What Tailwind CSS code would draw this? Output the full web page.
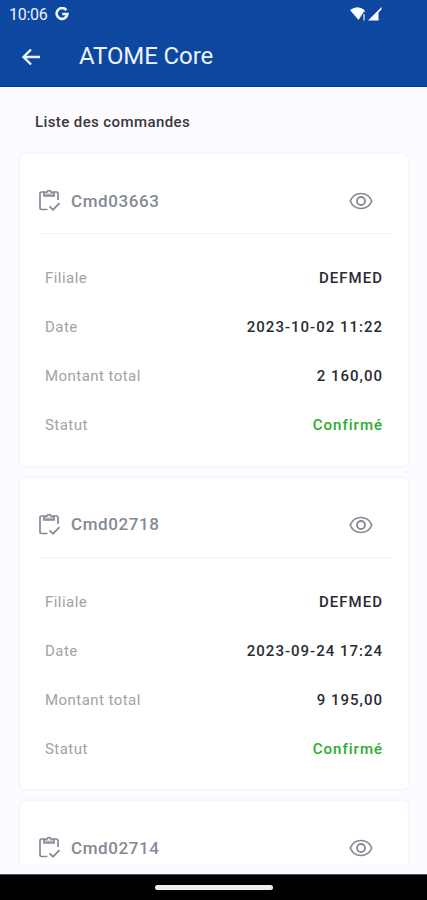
<!DOCTYPE html>
<html lang="fr">
<head>
<meta charset="utf-8">
<meta name="viewport" content="width=device-width, initial-scale=1">
<title>ATOME Core</title>
<script src="https://cdn.jsdelivr.net/npm/@tailwindcss/browser@4"></script>
</head>
<body class="bg-[#fdfbff]">
<svg class="hidden">
  <symbol id="clip" viewBox="0 0 24 24"><g fill="none" stroke="currentColor" stroke-width="1.700"><path d="M10.500 21.500H4.500A1.500 1.500 0 0 1 3 20V5.500A1.500 1.500 0 0 1 4.500 4H8M16 4h3.500A1.500 1.500 0 0 1 21 5.500V12"/><path d="M12.500 18.300l3.500 3.400 6.500-6.500"/><path d="M7 4.300h2.700a2.400 2.400 0 0 1 4.600 0H17V8H7Z"/></g><path fill="currentColor" d="M8 5.500h8V8H8z" opacity=".6"/></symbol>
  <symbol id="eye" viewBox="0 0 24 18"><path d="M1.200 9C3.200 4.200 7.200 1.500 12 1.500S20.800 4.200 22.800 9C20.800 13.800 16.800 16.500 12 16.500S3.200 13.800 1.200 9Z" fill="none" stroke="currentColor" stroke-width="1.700"/><circle cx="12" cy="9" r="4" fill="none" stroke="currentColor" stroke-width="1.800"/></symbol>
</svg>
<div class="flex h-[900px] w-[427px] flex-col overflow-hidden bg-[#fdfbff] font-['Roboto',sans-serif]">
  <header class="h-[87px] shrink-0 border-b border-[#0a3793] bg-[#0e479f] text-[#edf2ff]">
    <div class="flex h-7 items-center pl-[9px]">
      <span class="w-[46px] pt-px text-[16px] leading-7 tracking-[-0.3px]">10:06</span>
      <svg class="h-[14px] w-[14px]" viewBox="0 0 14 14" fill="none" stroke="currentColor" stroke-width="2.600"><path d="M11.300 3.100A5.400 5.400 0 1 0 12.400 7H7.200"/></svg>
      <svg class="ml-[281px] h-[16px] w-[33px]" viewBox="0 0 33 16" fill="#fff"><path d="M0 4Q7.500-1.600 14.500 4L13 7 8.500 14Z"/><path d="M13.500 4.500h1.600v1.800h-1.600zM13 8h2v6.500h-2z" opacity=".55"/><path d="M18 14.500 31.500 1V3.500L28.500 6.500V14.500Z"/></svg>
    </div>
    <div class="flex h-[58px] items-center pl-[21px]">
      <svg class="h-[20px] w-[20px]" viewBox="0 0 20 20" fill="none" stroke="currentColor" stroke-width="2.400"><path d="M19 10H3M10 2.500 2.500 10l7.500 7.500"/></svg>
      <h1 class="-mt-[3px] ml-[38px] text-[24px] leading-7 tracking-[-0.1px]">ATOME Core</h1>
    </div>
  </header>
  <main class="h-[777px] shrink-0 overflow-hidden px-[18px]">
    <h2 class="h-[65px] pt-[25px] pl-[17px] text-[15px] leading-5 font-medium tracking-[0.4px] text-[#38383d]">Liste des commandes</h2>
    <div id="orders" class="-mr-px flex flex-col"></div>
  </main>
  <footer class="mt-[10px] flex h-[26px] shrink-0 items-center justify-center border-t border-[#555] bg-black">
    <div class="h-[5px] w-[118px] rounded-full bg-[#eee]"></div>
  </footer>
</div>
<template id="card">
  <article class="mb-[8px] min-h-[315.5px] shrink-0 rounded-[8px] border-2 border-[#f7f6fb] bg-white pr-[16px] pl-[20px]">
    <div class="flex h-[80px] items-center border-b border-[#f5f5f7] pt-[15px] text-[#858994]">
      <svg class="-mt-[2px] -ml-[3px] h-[24px] w-[24px]"><use href="#clip"/></svg>
      <span data-f="id" class="-mt-px ml-[10px] text-[17px] leading-6 font-medium tracking-[0.6px]"></span>
      <svg class="mr-[19px] ml-auto h-[18px] w-[24px]"><use href="#eye"/></svg>
    </div>
    <dl class="flex flex-col pt-[20px] pr-[9px] pl-[5px] text-[15px]"></dl>
  </article>
</template>
<template id="row">
  <div class="flex h-[49px] items-center justify-between"><dt class="tracking-[0.45px] text-[#a0a2a9]"></dt><dd class="font-medium tracking-[1px] text-[#2a2c34]"></dd></div>
</template>
<script>
const orders = [
  {id:'Cmd03663', rows:[['Filiale','DEFMED'],['Date','2023-10-02 11:22'],['Montant total','2 160,00'],['Statut','Confirmé']]},
  {id:'Cmd02718', rows:[['Filiale','DEFMED'],['Date','2023-09-24 17:24'],['Montant total','9 195,00'],['Statut','Confirmé']]},
  {id:'Cmd02714', rows:[]}
];
for (const o of orders) {
  const c = document.getElementById('card').content.cloneNode(true);
  c.querySelector('[data-f]').textContent = o.id;
  for (const [k, v] of o.rows) {
    const r = document.getElementById('row').content.cloneNode(true);
    r.querySelector('dt').textContent = k;
    const d = r.querySelector('dd');
    d.textContent = v;
    if (k === 'Statut') d.style.color = '#2cab32';
    c.querySelector('dl').append(r);
  }
  document.getElementById('orders').append(c);
}
</script>
</body>
</html>
